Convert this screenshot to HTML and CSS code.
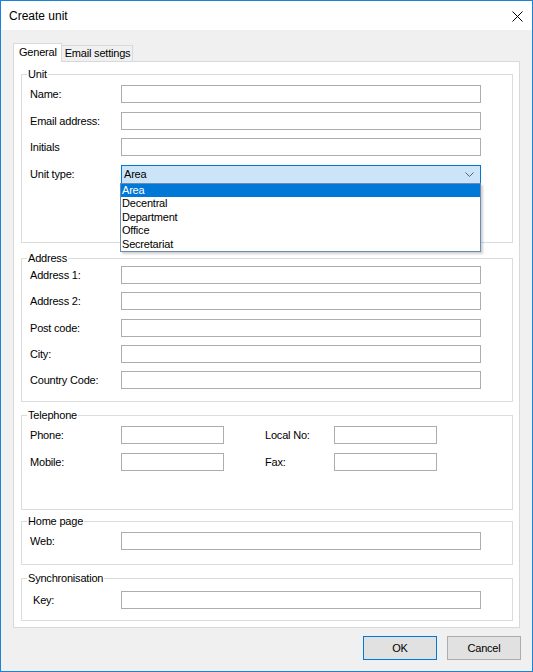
FILE: index.html
```html
<!DOCTYPE html>
<html>
<head>
<meta charset="utf-8">
<title>Create unit</title>
<link rel="stylesheet" href="styles.css">
</head>
<body>
<div class="window">
  <div class="titlebar">
    <span class="title">Create unit</span>
    <svg class="close" width="11" height="11" viewBox="0 0 11 11"><path d="M0.5 0.5 L10.5 10.5 M10.5 0.5 L0.5 10.5" stroke="#000" stroke-width="1" fill="none"/></svg>
  </div>
  <div class="client">
    <div class="tabs">
      <div class="tab active">General</div>
      <div class="tab">Email settings</div>
    </div>
    <div class="panel">
      <fieldset class="group g-unit">
        <legend>Unit</legend>
        <div class="rows rows-unit">
          <label class="lbl">Name:</label><div class="input"></div>
          <label class="lbl">Email address:</label><div class="input"></div>
          <label class="lbl">Initials</label><div class="input"></div>
          <label class="lbl">Unit type:</label>
          <div class="combo">
            <span class="combo-text">Area</span>
            <svg class="chev" width="9" height="5" viewBox="0 0 9 5"><path d="M0.5 0.5 L4.5 4.5 L8.5 0.5" stroke="#606060" stroke-width="1" fill="none"/></svg>
            <div class="dropdown">
              <div class="item selected">Area</div>
              <div class="item">Decentral</div>
              <div class="item">Department</div>
              <div class="item">Office</div>
              <div class="item">Secretariat</div>
            </div>
          </div>
        </div>
      </fieldset>
      <fieldset class="group g-address">
        <legend>Address</legend>
        <div class="rows rows-address">
          <label class="lbl">Address 1:</label><div class="input"></div>
          <label class="lbl">Address 2:</label><div class="input"></div>
          <label class="lbl">Post code:</label><div class="input"></div>
          <label class="lbl">City:</label><div class="input"></div>
          <label class="lbl">Country Code:</label><div class="input"></div>
        </div>
      </fieldset>
      <fieldset class="group g-phone">
        <legend>Telephone</legend>
        <div class="rows rows-phone">
          <label class="lbl">Phone:</label><div class="input"></div><span></span><label class="lbl">Local No:</label><div class="input"></div>
          <label class="lbl">Mobile:</label><div class="input"></div><span></span><label class="lbl">Fax:</label><div class="input"></div>
        </div>
      </fieldset>
      <fieldset class="group g-web">
        <legend>Home page</legend>
        <div class="rows rows-single">
          <label class="lbl">Web:</label><div class="input"></div>
        </div>
      </fieldset>
      <fieldset class="group g-sync">
        <legend>Synchronisation</legend>
        <div class="rows rows-single">
          <label class="lbl lbl-key">Key:</label><div class="input"></div>
        </div>
      </fieldset>
    </div>
    <div class="buttons">
      <button class="btn btn-default">OK</button>
      <button class="btn">Cancel</button>
    </div>
  </div>
</div>
</body>
</html>
```

FILE: styles.css
```css
* { box-sizing: border-box; }
html, body { margin: 0; padding: 0; }
body {
  font-family: "Liberation Sans", Arial, sans-serif;
  font-size: 11px;
  letter-spacing: -0.2px;
  color: #000;
  background: #fff;
}
.window {
  width: 533px;
  height: 672px;
  border: 1px solid #1883d7;
  display: flex;
  flex-direction: column;
  background: #f0f0f0;
}
.titlebar {
  height: 29px;
  background: #fff;
  display: flex;
  align-items: center;
  justify-content: space-between;
  padding: 0 9px 0 8px;
  flex: none;
}
.title {
  font-size: 12px;
  letter-spacing: 0;
  padding-top: 1px;
}
.close { display: block; margin-top: 1px; }
.client {
  flex: 1;
  padding: 13px 12px 0 12px;
  display: flex;
  flex-direction: column;
}
.tabs {
  display: flex;
  align-items: flex-end;
  margin-bottom: -1px;
  position: relative;
  z-index: 1;
}
.tab {
  border: 1px solid #d9d9d9;
  background: #f0f0f0;
  height: 17px;
  line-height: 15px;
  padding: 0 2px 0 3px;
  border-left: none;
}
.tab.active {
  background: #fff;
  height: 19px;
  line-height: 17px;
  border-left: 1px solid #d9d9d9;
  border-bottom: none;
  padding: 0 4px 0 5px;
}
.panel {
  background: #fff;
  border: 1px solid #d9d9d9;
  padding: 6px 6px 6px 7px;
}
.group {
  margin: 0;
  padding: 0 0 0 8px;
  border: 1px solid #dcdcdc;
  min-width: 0;
}
.group legend {
  margin-left: -3px;
  padding: 0 1px;
  line-height: 13px;
}
.rows {
  display: grid;
  grid-template-columns: 91px 360px;
  align-items: center;
}
.lbl { padding-top: 0; }
.lbl-key { padding-left: 3px; }
.input {
  height: 18px;
  border: 1px solid #adadad;
  background: #fff;
}
.g-unit { padding-bottom: 58.5px; }
.rows-unit {
  margin-top: 4px;
  grid-template-rows: 18px 18px 18px 19px;
  row-gap: 8.5px;
}
.g-address { margin-top: 9px; padding-bottom: 12px; }
.rows-address {
  margin-top: 1px;
  row-gap: 8.33px;
}
.g-phone { margin-top: 7px; padding-bottom: 38px; }
.rows-phone {
  margin-top: 4px;
  grid-template-columns: 91px 103px 41px 69px 103px;
  row-gap: 9px;
}
.g-web { margin-top: 5px; padding-bottom: 14px; }
.g-sync { margin-top: 7px; padding-bottom: 11.5px; }
.rows-single { margin-top: 4px; }
.g-sync .rows-single { margin-top: 5.5px; }

.combo {
  position: relative;
  height: 19px;
  border: 1px solid #0078d7;
  background: #cce4f7;
  display: flex;
  align-items: center;
  justify-content: space-between;
  padding: 0 6px 0 2px;
}
.combo-text { line-height: 17px; }
.chev { display: block; }
.dropdown {
  position: absolute;
  left: -2px;
  top: 100%;
  width: 361px;
  background: #fff;
  border: 1px solid #6a8cb3;
  box-shadow: 2px 2px 2px rgba(0, 0, 0, 0.18);
  z-index: 5;
}
.item {
  height: 13.6px;
  line-height: 13.6px;
  padding-left: 1px;
}
.item.selected {
  background: #0078d7;
  color: #fff;
}
.buttons {
  display: flex;
  justify-content: flex-end;
  gap: 10px;
  margin-top: 8px;
  margin-right: -1px;
}
.btn {
  width: 74px;
  height: 24px;
  background: #e1e1e1;
  border: 1px solid #adadad;
  font-family: "Liberation Sans", Arial, sans-serif;
  font-size: 11px;
  letter-spacing: -0.2px;
  color: #000;
  padding: 0;
  margin: 0;
}
.btn-default { border-color: #0078d7; }
```
